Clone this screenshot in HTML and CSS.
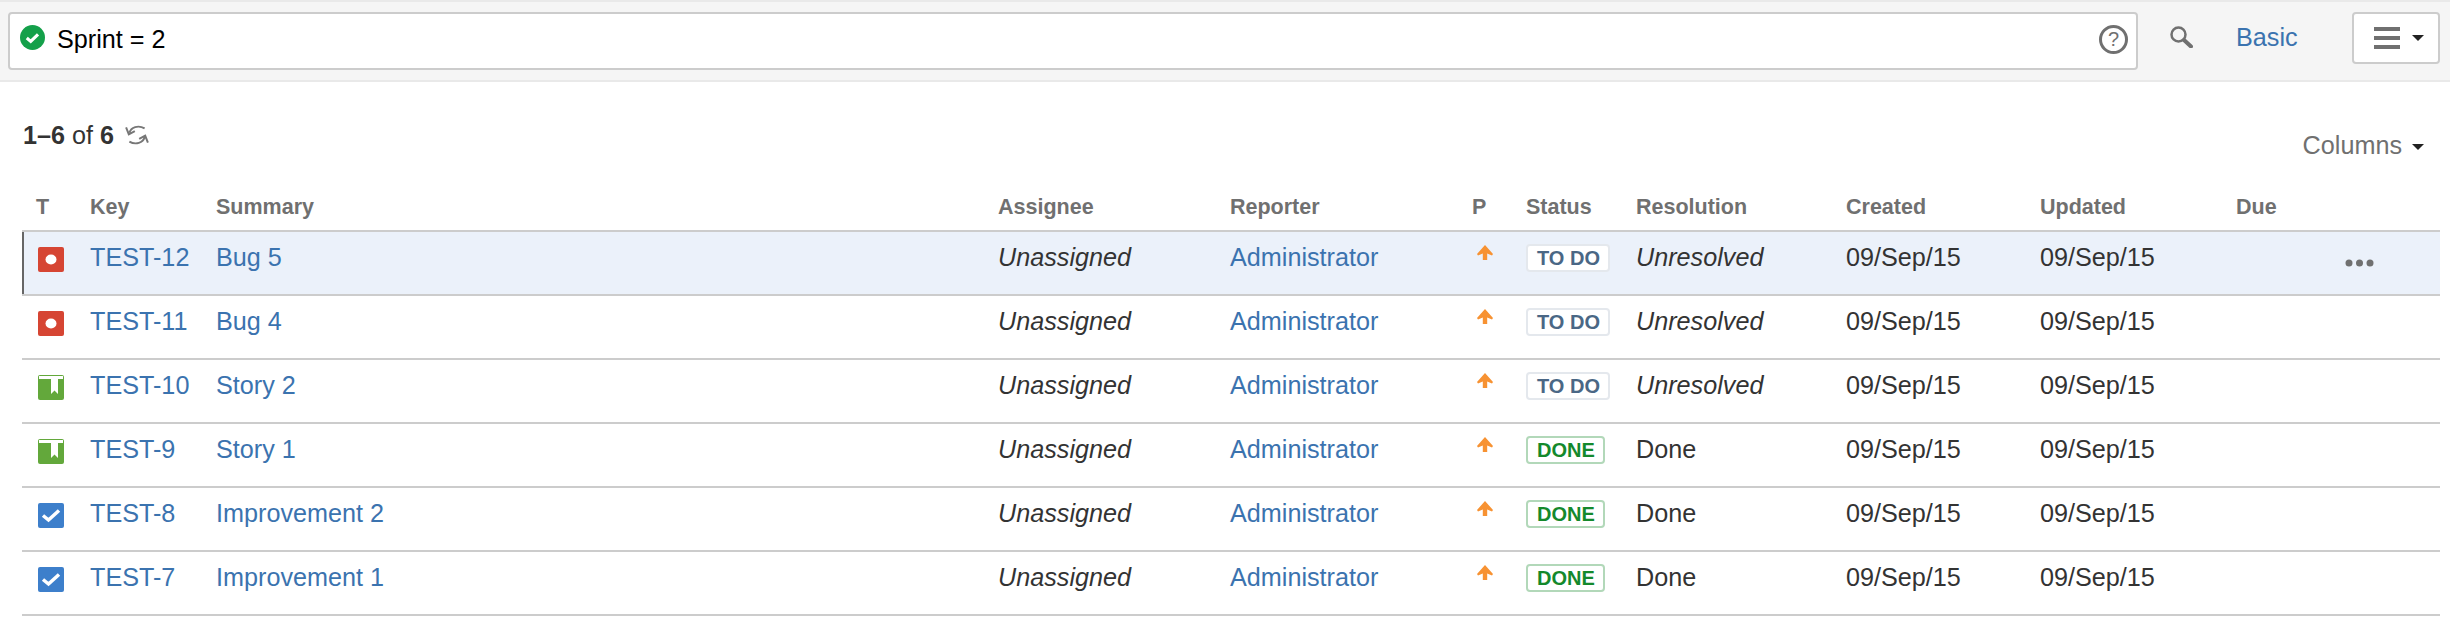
FILE: index.html
```html
<!DOCTYPE html>
<html lang="en">
<head>
    <meta charset="UTF-8">
    <title>Issue Navigator</title>
    <link rel="stylesheet" href="styles.css">
</head>
<body>
    <!-- Shared issue icons -->
    <svg class="icon-defs" aria-hidden="true">
        <symbol id="icon-bug" viewBox="0 0 26 25">
            <rect width="26" height="25" rx="2" fill="#d64533"/>
            <ellipse cx="13" cy="12.500" rx="5.500" ry="5" fill="#fff"/>
        </symbol>
        <symbol id="icon-story" viewBox="0 0 26 25">
            <rect width="26" height="25" rx="2" fill="#63a83b"/>
            <path d="M1 1h24v3h-5v15l-3.500-3.500L13 19V4H1z" fill="#fff"/>
        </symbol>
        <symbol id="icon-improvement" viewBox="0 0 26 25">
            <rect width="26" height="25" rx="2" fill="#3d7fcb"/>
            <path d="M5 12.500l5.500 4.500L21 7.500" fill="none" stroke="#fff" stroke-width="3.500"/>
        </symbol>
        <symbol id="icon-priority" viewBox="0 0 16 15">
            <path d="M8 0l8 9-1 1.500-4.800-2V15H5.800V8.500L1 10.500 0 9z" fill="#f79232"/>
        </symbol>
    </svg>

    <div class="search-bar">
        <div class="query-box">
            <svg class="query-ok" viewBox="0 0 24 24">
                <circle cx="12" cy="12" r="12" fill="#14a04a"/>
                <path d="M6.500 12.500l3.800 3.300 7-6.800" fill="none" stroke="#fff" stroke-width="3"/>
            </svg>
            <span class="query-text">Sprint = 2</span>
            <span class="query-help">?</span>
        </div>
        <svg class="search-icon" viewBox="0 0 23 22">
            <circle cx="8.500" cy="8.500" r="7" fill="none" stroke="#707070" stroke-width="2.500"/>
            <path d="M14 14l7 6.500" stroke="#707070" stroke-width="4" stroke-linecap="round"/>
        </svg>
        <a class="basic-link" href="#">Basic</a>
        <button class="menu-button">
            <span class="burger"><i></i><i></i><i></i></span>
            <span class="caret"></span>
        </button>
    </div>

    <div class="results-head">
        <div class="results-count">
            <span><strong>1–6</strong> of <strong>6</strong></span>
            <svg class="refresh-icon" viewBox="0 0 22 22">
                <path d="M4 9C5.500 4 12 1.500 18 5M1 4l2.500 6.500L9 7.500M18 13c-1.500 5-8 7.500-14 4M21 18l-2.500-6.500-5.500 3" fill="none" stroke="#777" stroke-width="1.800"/>
            </svg>
        </div>
        <div class="columns-toggle">Columns <span class="caret"></span></div>
    </div>

    <table class="issues">
        <colgroup>
            <col class="col-type"><col class="col-key"><col class="col-summary"><col class="col-assignee">
            <col class="col-reporter"><col class="col-priority"><col class="col-status"><col class="col-resolution">
            <col class="col-created"><col class="col-updated"><col class="col-due">
        </colgroup>
        <thead>
            <tr>
                <th>T</th><th>Key</th><th>Summary</th><th>Assignee</th><th>Reporter</th><th>P</th>
                <th>Status</th><th>Resolution</th><th>Created</th><th>Updated</th><th>Due</th>
            </tr>
        </thead>
        <tbody>
            <tr class="focused">
                <td><svg class="type-icon"><use href="#icon-bug"/></svg></td>
                <td><a href="#">TEST-12</a></td>
                <td><a href="#">Bug 5</a></td>
                <td><em>Unassigned</em></td>
                <td><a href="#">Administrator</a></td>
                <td><svg class="priority-icon"><use href="#icon-priority"/></svg></td>
                <td><span class="lozenge todo">TO DO</span></td>
                <td><em>Unresolved</em></td>
                <td>09/Sep/15</td>
                <td>09/Sep/15</td>
                <td class="due-cell">
                    <svg class="row-actions" viewBox="0 0 29 8">
                        <circle cx="4" cy="4" r="3.500" fill="#707070"/>
                        <circle cx="14.500" cy="4" r="3.500" fill="#707070"/>
                        <circle cx="25" cy="4" r="3.500" fill="#707070"/>
                    </svg>
                </td>
            </tr>
            <tr>
                <td><svg class="type-icon"><use href="#icon-bug"/></svg></td>
                <td><a href="#">TEST-11</a></td>
                <td><a href="#">Bug 4</a></td>
                <td><em>Unassigned</em></td>
                <td><a href="#">Administrator</a></td>
                <td><svg class="priority-icon"><use href="#icon-priority"/></svg></td>
                <td><span class="lozenge todo">TO DO</span></td>
                <td><em>Unresolved</em></td>
                <td>09/Sep/15</td>
                <td>09/Sep/15</td>
                <td></td>
            </tr>
            <tr>
                <td><svg class="type-icon"><use href="#icon-story"/></svg></td>
                <td><a href="#">TEST-10</a></td>
                <td><a href="#">Story 2</a></td>
                <td><em>Unassigned</em></td>
                <td><a href="#">Administrator</a></td>
                <td><svg class="priority-icon"><use href="#icon-priority"/></svg></td>
                <td><span class="lozenge todo">TO DO</span></td>
                <td><em>Unresolved</em></td>
                <td>09/Sep/15</td>
                <td>09/Sep/15</td>
                <td></td>
            </tr>
            <tr>
                <td><svg class="type-icon"><use href="#icon-story"/></svg></td>
                <td><a href="#">TEST-9</a></td>
                <td><a href="#">Story 1</a></td>
                <td><em>Unassigned</em></td>
                <td><a href="#">Administrator</a></td>
                <td><svg class="priority-icon"><use href="#icon-priority"/></svg></td>
                <td><span class="lozenge done">DONE</span></td>
                <td>Done</td>
                <td>09/Sep/15</td>
                <td>09/Sep/15</td>
                <td></td>
            </tr>
            <tr>
                <td><svg class="type-icon"><use href="#icon-improvement"/></svg></td>
                <td><a href="#">TEST-8</a></td>
                <td><a href="#">Improvement 2</a></td>
                <td><em>Unassigned</em></td>
                <td><a href="#">Administrator</a></td>
                <td><svg class="priority-icon"><use href="#icon-priority"/></svg></td>
                <td><span class="lozenge done">DONE</span></td>
                <td>Done</td>
                <td>09/Sep/15</td>
                <td>09/Sep/15</td>
                <td></td>
            </tr>
            <tr>
                <td><svg class="type-icon"><use href="#icon-improvement"/></svg></td>
                <td><a href="#">TEST-7</a></td>
                <td><a href="#">Improvement 1</a></td>
                <td><em>Unassigned</em></td>
                <td><a href="#">Administrator</a></td>
                <td><svg class="priority-icon"><use href="#icon-priority"/></svg></td>
                <td><span class="lozenge done">DONE</span></td>
                <td>Done</td>
                <td>09/Sep/15</td>
                <td>09/Sep/15</td>
                <td></td>
            </tr>
        </tbody>
    </table>
</body>
</html>
```

FILE: styles.css
```css
* {
    margin: 0;
    padding: 0;
    box-sizing: border-box;
}

body {
    font-family: 'Liberation Sans', Arial, sans-serif;
    font-size: 25.2px;
    line-height: 30px;
    color: #333;
    background: #fff;
}

a {
    color: #3b73af;
    text-decoration: none;
}

.icon-defs {
    display: none;
}

.search-bar {
    display: flex;
    align-items: flex-start;
    height: 82px;
    padding: 10px 10px 0 8px;
    background: #f5f5f5;
    border-top: 2px solid #e9e9e9;
    border-bottom: 2px solid #e9e9e9;
}

.query-box {
    display: flex;
    align-items: center;
    width: 2130px;
    height: 58px;
    padding: 0 8px 4px 10px;
    background: #fff;
    border: 2px solid #ccc;
    border-radius: 4px;
}

.query-ok {
    width: 25px;
    height: 25px;
    margin: 0 12px 3px 0;
}

.query-text {
    flex: 1;
    color: #000;
}

.query-help {
    width: 29px;
    height: 29px;
    border: 3px solid #707070;
    border-radius: 50%;
    color: #707070;
    font-size: 20px;
    line-height: 23px;
    text-align: center;
}

.search-icon {
    width: 23px;
    height: 22px;
    margin: 14px 0 0 32px;
}

.basic-link {
    margin: 10px 0 0 43px;
}

.menu-button {
    display: flex;
    align-items: center;
    width: 88px;
    height: 52px;
    margin-left: 54px;
    padding-left: 20px;
    background: #fff;
    border: 2px solid #ccc;
    border-radius: 4px;
}

.burger {
    display: flex;
    flex-direction: column;
    gap: 5px;
    width: 26px;
    margin-right: 12px;
}

.burger i {
    display: block;
    height: 4px;
    background: #707070;
}

.caret {
    display: inline-block;
    border-style: solid;
    border-width: 6px 6px 0;
    border-color: #222 transparent transparent;
    vertical-align: middle;
}

.results-head {
    display: flex;
    justify-content: space-between;
    align-items: flex-start;
    height: 110px;
    padding: 38px 10px 0 23px;
}

.results-count {
    display: flex;
    align-items: center;
}

.refresh-icon {
    width: 24px;
    height: 24px;
    margin-left: 11px;
}

.columns-toggle {
    margin-top: 10px;
    padding-right: 16px;
    color: #707070;
}

.columns-toggle .caret {
    margin-left: 3px;
}

.issues {
    width: 2418px;
    margin-left: 22px;
    table-layout: fixed;
    border-collapse: separate;
    border-spacing: 0;
}

.col-type { width: 54px; }
.col-key { width: 126px; }
.col-summary { width: 782px; }
.col-assignee { width: 232px; }
.col-reporter { width: 242px; }
.col-priority { width: 54px; }
.col-status { width: 110px; }
.col-resolution { width: 210px; }
.col-created { width: 194px; }
.col-updated { width: 196px; }
.col-due { width: 218px; }

.issues th {
    padding: 0 0 8px 14px;
    border-bottom: 2px solid #ccc;
    color: #707070;
    font-size: 21.5px;
    font-weight: bold;
    text-align: left;
}

.issues td {
    height: 64px;
    padding: 10px 0 0 14px;
    border-bottom: 2px solid #ccc;
    vertical-align: top;
    white-space: nowrap;
}

.issues tr.focused td {
    background: #ebf1fa;
}

.issues tr.focused td:first-child {
    box-shadow: inset 2px 0 0 #666;
}

.type-icon {
    display: block;
    width: 26px;
    height: 25px;
    margin: 5px 0 0 2px;
}

.priority-icon {
    display: block;
    width: 16px;
    height: 15px;
    margin: 3px 0 0 5px;
}

.lozenge {
    display: inline-block;
    height: 28px;
    margin-top: 2px;
    padding: 0 8px 0 9px;
    background: #fff;
    border: 2px solid;
    border-radius: 4px;
    font-size: 20px;
    font-weight: bold;
    line-height: 24px;
    vertical-align: top;
}

.lozenge.todo {
    color: #4a6785;
    border-color: #e4e8ed;
}

.lozenge.done {
    color: #14892c;
    border-color: #b2d8b9;
}

.due-cell {
    position: relative;
}

.row-actions {
    position: absolute;
    left: 123px;
    top: 27px;
    width: 29px;
    height: 8px;
}
```
